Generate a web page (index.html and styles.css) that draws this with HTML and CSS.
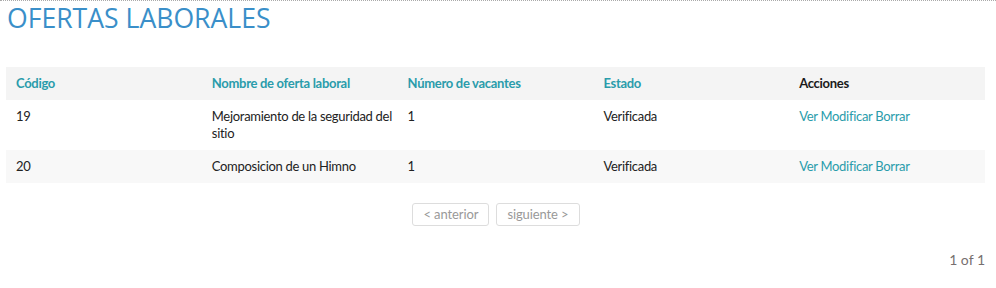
FILE: index.html
```html
<!DOCTYPE html>
<html>
<head>
<meta charset="utf-8">
<link rel="stylesheet" href="styles.css">
</head>
<body>
<div class="page">
  <h1 class="title">OFERTAS LABORALES</h1>
  <table class="grid">
    <thead>
      <tr>
        <th>Código</th>
        <th>Nombre de oferta laboral</th>
        <th>Número de vacantes</th>
        <th>Estado</th>
        <th class="plain">Acciones</th>
      </tr>
    </thead>
    <tbody>
      <tr>
        <td>19</td>
        <td>Mejoramiento de la seguridad del sitio</td>
        <td>1</td>
        <td>Verificada</td>
        <td><a href="#">Ver</a> <a href="#">Modificar</a> <a href="#">Borrar</a></td>
      </tr>
      <tr class="alt">
        <td>20</td>
        <td>Composicion de un Himno</td>
        <td>1</td>
        <td>Verificada</td>
        <td><a href="#">Ver</a> <a href="#">Modificar</a> <a href="#">Borrar</a></td>
      </tr>
    </tbody>
  </table>
  <div class="pager">
    <span class="btn">&lt; anterior</span>
    <span class="btn">siguiente &gt;</span>
  </div>
  <div class="count">1 of 1</div>
</div>
</body>
</html>
```
FILE: styles.css
```css
html, body { margin: 0; padding: 0; background: #fff; }
body { font-family: "Lato", "Open Sans", sans-serif; font-size: 13px; letter-spacing: -0.3px; color: #222; }
.page { border-top: 1px dotted #aaa; padding: 0 11px 0 6px; }
.title {
  font-family: "Open Sans", sans-serif;
  font-weight: 400;
  font-size: 26.6px;
  letter-spacing: 0;
  color: #3a8fc9;
  margin: 0 0 0 1px;
  line-height: 35px;
}
.grid {
  width: 979px;
  margin-top: 31px;
  border-collapse: collapse;
  table-layout: fixed;
}
.grid th, .grid td {
  text-align: left;
  vertical-align: top;
  padding: 8px 4px 8px 10px;
  line-height: 17px;
}
.grid th { font-weight: 700; color: #2a9cab; background: #f4f4f4; }
.grid th.plain { color: #1a1a1a; }
.grid tbody tr { background: #fff; }
.grid tbody tr.alt { background: #f8f8f8; }
.grid a { color: #2a9cab; text-decoration: none; }
.pager {
  display: flex;
  justify-content: center;
  gap: 7px;
  margin-top: 20px;
  padding-left: 1px;
}
.btn {
  border: 1px solid #ddd;
  border-radius: 3px;
  color: #999;
  padding: 3px 10px;
  line-height: 15px;
  letter-spacing: -0.1px;
}
.count { text-align: right; color: #776f6f; margin-top: 25px; font-size: 14px; letter-spacing: 0; }
```
